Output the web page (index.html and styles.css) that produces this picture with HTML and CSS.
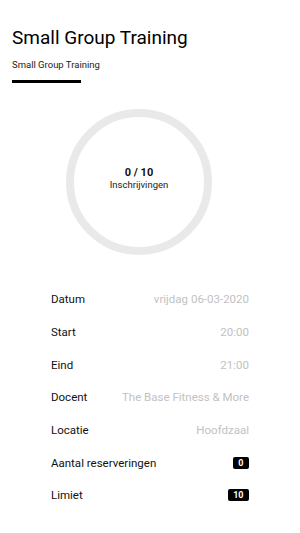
FILE: index.html
```html
<!DOCTYPE html>
<html lang="nl">
  <head>
    <meta charset="UTF-8" />
    <meta name="viewport" content="width=device-width, initial-scale=1.0" />
    <title>Small Group Training</title>
    <link rel="stylesheet" href="styles.css">
  </head>
  <body>
    <div class="header">
      <h1>Small Group Training</h1>
      <div class="tab">Small Group Training</div>
      <div class="tab-line"></div>
    </div>

    <div class="progress">
      <div class="ring">
        <div class="count">0 / 10</div>
        <div class="count-label">Inschrijvingen</div>
      </div>
    </div>

    <div class="details">
      <div class="row">
        <span class="label">Datum</span>
        <span class="value">vrijdag 06-03-2020</span>
      </div>
      <div class="row">
        <span class="label">Start</span>
        <span class="value">20:00</span>
      </div>
      <div class="row">
        <span class="label">Eind</span>
        <span class="value">21:00</span>
      </div>
      <div class="row">
        <span class="label">Docent</span>
        <span class="value">The Base Fitness &amp; More</span>
      </div>
      <div class="row">
        <span class="label">Locatie</span>
        <span class="value">Hoofdzaal</span>
      </div>
      <div class="row">
        <span class="label">Aantal reserveringen</span>
        <span class="badge">0</span>
      </div>
      <div class="row">
        <span class="label">Limiet</span>
        <span class="badge">10</span>
      </div>
    </div>
  </body>
</html>
```

FILE: styles.css
```css
body {
  margin: 0;
  font-family: Roboto, "Liberation Sans", sans-serif;
  color: #111;
  background-color: #fff;
}

.header {
  padding: 26px 12px 0;
}

h1 {
  margin: 0;
  font-size: 19px;
  font-weight: 400;
  line-height: 24px;
  color: #000;
}

.tab {
  margin-top: 9px;
  font-size: 9.5px;
  line-height: 12px;
  color: #222;
}

.tab-line {
  margin-top: 9px;
  width: 69px;
  height: 3px;
  background-color: #000;
}

.progress {
  padding: 26px 0 0 66px;
}

.ring {
  width: 130px;
  height: 130px;
  border: 8px solid #e9e9e9;
  border-radius: 50%;
  display: flex;
  flex-direction: column;
  align-items: center;
  justify-content: center;
  padding-bottom: 8px;
  box-sizing: content-box;
  height: 122px;
}

.count {
  font-size: 11px;
  font-weight: 700;
  line-height: 13px;
  color: #111;
}

.count-label {
  font-size: 9.5px;
  line-height: 11px;
  color: #222;
}

.details {
  margin: 28px 51px 0;
}

.row {
  display: flex;
  justify-content: space-between;
  align-items: center;
  height: 32.7px;
  font-size: 11.5px;
}

.label {
  color: #111;
}

.value {
  color: #c2c2c2;
}

.badge {
  background-color: #000;
  color: #fff;
  font-size: 9px;
  font-weight: 700;
  line-height: 12px;
  padding: 0 5.5px;
  border-radius: 2px;
}
```
